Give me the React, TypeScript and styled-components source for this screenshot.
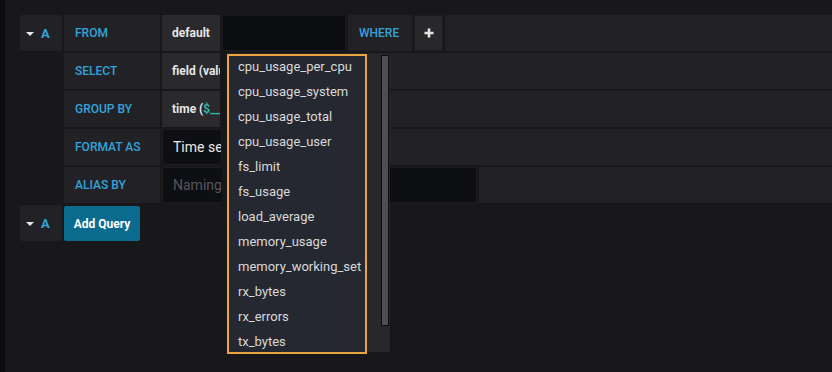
import React from "react";
import styled, { createGlobalStyle } from "styled-components";

const GlobalStyle = createGlobalStyle`
  html, body {
    margin: 0;
    padding: 0;
    background: #18181b;
    font-family: Roboto, "Liberation Sans", sans-serif;
  }
`;

const measurements = [
  "cpu_usage_per_cpu",
  "cpu_usage_system",
  "cpu_usage_total",
  "cpu_usage_user",
  "fs_limit",
  "fs_usage",
  "load_average",
  "memory_usage",
  "memory_working_set",
  "rx_bytes",
  "rx_errors",
  "tx_bytes",
];

export default function App() {
  return (
    <>
      <GlobalStyle />
      <Page>
        <Editor>
          <Row>
            <CaretCell>
              <Caret />
              <RefId>A</RefId>
            </CaretCell>
            <Label>FROM</Label>
            <Value>default</Value>
            <BlackInput />
            <Label width="64px">WHERE</Label>
            <PlusButton>
              <svg width="10" height="10" viewBox="0 0 10 10">
                <path d="M5 0.5v9M0.5 5h9" stroke="#e6e6e6" strokeWidth="2.6" />
              </svg>
            </PlusButton>
            <Filler />
          </Row>
          <Row>
            <Spacer />
            <Label>SELECT</Label>
            <Value>field (value)</Value>
            <Filler />
          </Row>
          <Row>
            <Spacer />
            <Label>GROUP BY</Label>
            <Value>
              time (<Var>$__interval</Var>)
            </Value>
            <Filler />
          </Row>
          <Row>
            <Spacer />
            <Label>FORMAT AS</Label>
            <DarkInput width="60px">
              <Clip>Time series</Clip>
            </DarkInput>
            <Filler />
          </Row>
          <Row>
            <Spacer />
            <Label>ALIAS BY</Label>
            <DarkInput width="315px" placeholder>
              <Clip>Naming pattern</Clip>
            </DarkInput>
            <Filler />
          </Row>
          <Row>
            <CaretCell>
              <Caret />
              <RefId>A</RefId>
            </CaretCell>
            <AddQuery>Add Query</AddQuery>
          </Row>
        </Editor>

        <Dropdown>
          <MenuList>
            {measurements.map((m) => (
              <MenuItem key={m}>{m}</MenuItem>
            ))}
          </MenuList>
          <ScrollPanel>
            <ScrollThumb />
          </ScrollPanel>
        </Dropdown>
      </Page>
    </>
  );
}

const Page = styled.div`
  position: relative;
  width: 832px;
  height: 372px;
  box-sizing: border-box;
  padding: 15px 0 0 15px;
  border-left: 5px solid #0c0c0e;
  background: #18181b;
  overflow: hidden;
`;

const Editor = styled.div`
  display: flex;
  flex-direction: column;
  gap: 2px;
`;

const Row = styled.div`
  display: flex;
  height: 36px;
  gap: 2px;
`;

const CaretCell = styled.div`
  width: 42px;
  display: flex;
  align-items: center;
  gap: 7px;
  padding-left: 6px;
  box-sizing: border-box;
  background: #222226;
  border-radius: 2px;
`;

const Caret = styled.span`
  width: 0;
  height: 0;
  border-left: 4px solid transparent;
  border-right: 4px solid transparent;
  border-top: 4px solid #e8e8e8;
  margin-top: 1px;
`;

const RefId = styled.span`
  color: #33a2d9;
  font-size: 13px;
  font-weight: 700;
`;

const Spacer = styled.div`
  width: 42px;
`;

const Label = styled.div<{ width?: string }>`
  width: ${(p) => p.width || "96px"};
  box-sizing: border-box;
  display: flex;
  align-items: center;
  padding-left: 11px;
  background: #222226;
  color: #33a2d9;
  font-size: 12px;
  font-weight: 500;
`;

const Value = styled.div`
  width: 58px;
  box-sizing: border-box;
  display: flex;
  align-items: center;
  padding-left: 10px;
  background: #2a2a2d;
  color: #e6e6e6;
  font-size: 12px;
  font-weight: 700;
  white-space: pre;
  overflow: hidden;
`;

const Var = styled.span`
  color: #2fb5a8;
`;

const BlackInput = styled.div`
  width: 124px;
  background: #0b0c0e;
  border: 1px solid #1b1b1e;
  border-radius: 3px;
  box-sizing: border-box;
`;

const DarkInput = styled.div<{ width: string; placeholder?: boolean }>`
  width: ${(p) => p.width};
  box-sizing: border-box;
  display: flex;
  align-items: center;
  padding-left: 10px;
  background: #0e0f12;
  border: 1px solid #1c1c1f;
  border-radius: 2px;
  color: ${(p) => (p.placeholder ? "#55565a" : "#e9e9e9")};
  font-size: 14px;
  white-space: nowrap;
  overflow: hidden;
`;

const Clip = styled.span`
  display: block;
  max-width: 50px;
  overflow: hidden;
  white-space: nowrap;
`;

const PlusButton = styled.div`
  width: 29px;
  display: flex;
  align-items: center;
  justify-content: center;
  background: #29292c;
  border: 1px solid #1d1d20;
  box-sizing: border-box;
  border-radius: 2px;
`;

const Filler = styled.div`
  flex: 1;
  background: #222226;
`;

const AddQuery = styled.button`
  width: 76px;
  height: 35px;
  margin-top: 1px;
  border: none;
  border-radius: 2px;
  background: #0b6b8f;
  color: #ffffff;
  font-family: Roboto, "Liberation Sans", sans-serif;
  font-size: 12px;
  font-weight: 700;
  padding: 0;
`;

const Dropdown = styled.div`
  position: absolute;
  left: 217px;
  top: 53px;
  display: flex;
  align-items: flex-start;
  padding: 1px 0 0 5px;
  background: linear-gradient(to right, #17171a 5px, transparent 5px);
`;

const MenuList = styled.div`
  width: 140px;
  height: 300px;
  box-sizing: border-box;
  border: 2px solid #eba540;
  background: #252830;
  overflow: hidden;
`;

const MenuItem = styled.div`
  height: 25px;
  box-sizing: border-box;
  padding: 0 0 3px 9px;
  line-height: 22px;
  color: #d8d9da;
  font-size: 13px;
  white-space: nowrap;
`;

const ScrollPanel = styled.div`
  width: 23px;
  height: 298px;
  background: #28282b;
  padding: 1px 0 0 14px;
  box-sizing: border-box;
`;

const ScrollThumb = styled.div`
  width: 8px;
  height: 271px;
  box-sizing: border-box;
  background: #4e4e53;
  border: 1px solid #0d0d0f;
`;
